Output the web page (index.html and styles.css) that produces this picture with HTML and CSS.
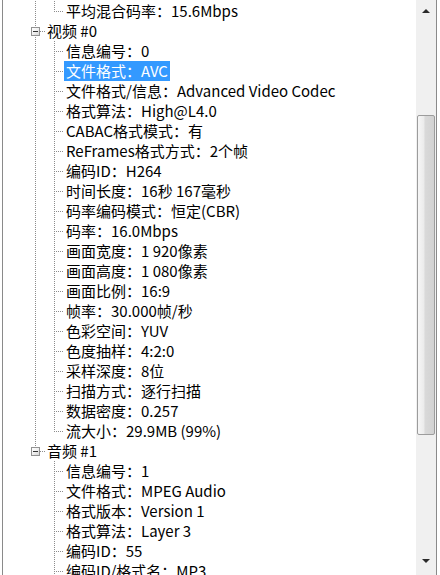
FILE: index.html
```html
<!DOCTYPE html>
<html lang="zh-CN">
<head>
<meta charset="utf-8">
<title>MediaInfo</title>
<link rel="stylesheet" href="styles.css">
</head>
<body>
<div class="tree">
  <div class="list">
    <div class="row"><span class="c c-pipe"></span><span class="c c-end"></span><span class="lbl">平均混合码率：15.6Mbps</span></div>
    <div class="row"><span class="c c-box c-more"><span class="box"><span class="minus"></span></span></span><span class="lbl root">视频 #0</span></div>
    <div class="row"><span class="c c-pipe"></span><span class="c c-tee"></span><span class="lbl">信息编号：0</span></div>
    <div class="row"><span class="c c-pipe"></span><span class="c c-tee"></span><span class="lbl sel">文件格式：AVC</span></div>
    <div class="row"><span class="c c-pipe"></span><span class="c c-tee"></span><span class="lbl">文件格式/信息：Advanced Video Codec</span></div>
    <div class="row"><span class="c c-pipe"></span><span class="c c-tee"></span><span class="lbl">格式算法：High@L4.0</span></div>
    <div class="row"><span class="c c-pipe"></span><span class="c c-tee"></span><span class="lbl">CABAC格式模式：有</span></div>
    <div class="row"><span class="c c-pipe"></span><span class="c c-tee"></span><span class="lbl">ReFrames格式方式：2个帧</span></div>
    <div class="row"><span class="c c-pipe"></span><span class="c c-tee"></span><span class="lbl">编码ID：H264</span></div>
    <div class="row"><span class="c c-pipe"></span><span class="c c-tee"></span><span class="lbl">时间长度：16秒 167毫秒</span></div>
    <div class="row"><span class="c c-pipe"></span><span class="c c-tee"></span><span class="lbl">码率编码模式：恒定(CBR)</span></div>
    <div class="row"><span class="c c-pipe"></span><span class="c c-tee"></span><span class="lbl">码率：16.0Mbps</span></div>
    <div class="row"><span class="c c-pipe"></span><span class="c c-tee"></span><span class="lbl">画面宽度：1 920像素</span></div>
    <div class="row"><span class="c c-pipe"></span><span class="c c-tee"></span><span class="lbl">画面高度：1 080像素</span></div>
    <div class="row"><span class="c c-pipe"></span><span class="c c-tee"></span><span class="lbl">画面比例：16:9</span></div>
    <div class="row"><span class="c c-pipe"></span><span class="c c-tee"></span><span class="lbl">帧率：30.000帧/秒</span></div>
    <div class="row"><span class="c c-pipe"></span><span class="c c-tee"></span><span class="lbl">色彩空间：YUV</span></div>
    <div class="row"><span class="c c-pipe"></span><span class="c c-tee"></span><span class="lbl">色度抽样：4:2:0</span></div>
    <div class="row"><span class="c c-pipe"></span><span class="c c-tee"></span><span class="lbl">采样深度：8位</span></div>
    <div class="row"><span class="c c-pipe"></span><span class="c c-tee"></span><span class="lbl">扫描方式：逐行扫描</span></div>
    <div class="row"><span class="c c-pipe"></span><span class="c c-tee"></span><span class="lbl">数据密度：0.257</span></div>
    <div class="row"><span class="c c-pipe"></span><span class="c c-end"></span><span class="lbl">流大小：29.9MB (99%)</span></div>
    <div class="row"><span class="c c-box"><span class="box"><span class="minus"></span></span></span><span class="lbl root">音频 #1</span></div>
    <div class="row"><span class="c"></span><span class="c c-tee"></span><span class="lbl">信息编号：1</span></div>
    <div class="row"><span class="c"></span><span class="c c-tee"></span><span class="lbl">文件格式：MPEG Audio</span></div>
    <div class="row"><span class="c"></span><span class="c c-tee"></span><span class="lbl">格式版本：Version 1</span></div>
    <div class="row"><span class="c"></span><span class="c c-tee"></span><span class="lbl">格式算法：Layer 3</span></div>
    <div class="row"><span class="c"></span><span class="c c-tee"></span><span class="lbl">编码ID：55</span></div>
    <div class="row"><span class="c"></span><span class="c c-tee"></span><span class="lbl">编码ID/格式名：MP3</span></div>
  </div>
  <div class="sb">
    <div class="sb-btn"><span class="arr-up"></span></div>
    <div class="sb-gap-top"></div>
    <div class="sb-thumb"></div>
    <div class="sb-gap"></div>
    <div class="sb-btn sb-btn-down"><span class="arr-down"></span></div>
  </div>
</div>
</body>
</html>
```
FILE: styles.css
```css
html, body {
  margin: 0;
  padding: 0;
  background: #ffffff;
  height: 575px;
  overflow: hidden;
}

.tree {
  box-sizing: border-box;
  display: flex;
  margin-left: 2px;
  width: 435px;
  height: 575px;
  border-left: 1px solid #8a8a8a;
  border-right: 1px solid #8a8a8a;
  font-family: "Noto Sans CJK SC", sans-serif;
  font-size: 15px;
  color: #000;
}

.list {
  flex: 1;
  min-width: 0;
  padding-top: 1px;
  overflow: hidden;
}

.row {
  display: flex;
  height: 20px;
  padding-left: 23px;
}

.c {
  flex: none;
  width: 19px;
  height: 20px;
  background-repeat: no-repeat;
}

.c-pipe {
  background-image: repeating-linear-gradient(to bottom, #8c8c8c 0 1px, transparent 1px 2px);
  background-size: 1px 20px;
  background-position: 9px 0;
}

.c-tee {
  background-image:
    repeating-linear-gradient(to bottom, #8c8c8c 0 1px, transparent 1px 2px),
    repeating-linear-gradient(to right, #8c8c8c 0 1px, transparent 1px 2px);
  background-size: 1px 20px, 10px 1px;
  background-position: 9px 0, 9px 10px;
}

.c-end {
  background-image:
    repeating-linear-gradient(to bottom, #8c8c8c 0 1px, transparent 1px 2px),
    repeating-linear-gradient(to right, #8c8c8c 0 1px, transparent 1px 2px);
  background-size: 1px 10px, 10px 1px;
  background-position: 9px 0, 9px 10px;
}

.c-box {
  box-sizing: border-box;
  display: flex;
  align-items: flex-start;
  padding: 6px 0 0 5px;
  background-image:
    repeating-linear-gradient(to bottom, #8c8c8c 0 1px, transparent 1px 2px),
    repeating-linear-gradient(to right, #8c8c8c 0 1px, transparent 1px 2px);
  background-size: 1px 6px, 5px 1px;
  background-position: 9px 0, 14px 10px;
}

.c-box.c-more {
  background-image:
    repeating-linear-gradient(to bottom, #8c8c8c 0 1px, transparent 1px 2px),
    repeating-linear-gradient(to bottom, #8c8c8c 0 1px, transparent 1px 2px),
    repeating-linear-gradient(to right, #8c8c8c 0 1px, transparent 1px 2px);
  background-size: 1px 6px, 1px 6px, 5px 1px;
  background-position: 9px 0, 9px 14px, 14px 10px;
}

.box {
  box-sizing: border-box;
  width: 9px;
  height: 9px;
  border: 1px solid #929292;
  background: linear-gradient(135deg, #ffffff 0%, #f0f0f0 50%, #d6d6d6 100%);
  display: flex;
  align-items: center;
  justify-content: center;
}

.minus {
  width: 5px;
  height: 1px;
  background: #333;
}

.lbl {
  flex: none;
  padding: 0 2px;
  line-height: 20px;
  height: 20px;
  white-space: nowrap;
}

.lbl.root {
  padding-left: 2px;
}

.sel {
  background: #3399ff;
  color: #ffffff;
}

/* scrollbar */
.sb {
  flex: none;
  width: 20px;
  display: flex;
  flex-direction: column;
  background: #f0f0f0;
}

.sb-btn {
  height: 22px;
  display: flex;
  align-items: center;
  justify-content: center;
  flex: none;
}

.sb-btn-down {
  margin-bottom: 3px;
}

.arr-up {
  width: 0;
  height: 0;
  border-left: 4px solid transparent;
  border-right: 4px solid transparent;
  border-bottom: 4px solid #2a2a2a;
}

.arr-down {
  width: 0;
  height: 0;
  border-left: 4px solid transparent;
  border-right: 4px solid transparent;
  border-top: 4px solid #2a2a2a;
}

.sb-gap-top {
  height: 93px;
  flex: none;
}

.sb-thumb {
  box-sizing: border-box;
  height: 320px;
  flex: none;
  margin: 0 1px;
  border: 1px solid #9c9c9c;
  border-radius: 2px;
  background: linear-gradient(to right, #f6f6f6 0%, #ececec 35%, #d9d9d9 45%, #d2d2d2 100%);
}

.sb-gap {
  flex: 1;
}
```
